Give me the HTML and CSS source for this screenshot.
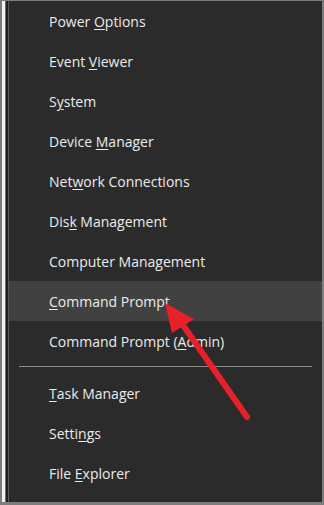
FILE: index.html
```html
<!DOCTYPE html>
<html lang="en">
<head>
    <meta charset="UTF-8">
    <meta name="viewport" content="width=device-width, initial-scale=1.0">
    <title>Quick Link Menu</title>
    <link rel="stylesheet" href="styles.css">
</head>
<body>
    <div class="frame">
        <div class="menu">
            <ul class="menu-list">
                <li class="menu-item">Power <u>O</u>ptions</li>
                <li class="menu-item">Event <u>V</u>iewer</li>
                <li class="menu-item">S<u>y</u>stem</li>
                <li class="menu-item">Device <u>M</u>anager</li>
                <li class="menu-item">Net<u>w</u>ork Connections</li>
                <li class="menu-item">Dis<u>k</u> Management</li>
                <li class="menu-item">Computer Mana<u>g</u>ement</li>
                <li class="menu-item active"><u>C</u>ommand Prompt</li>
                <li class="menu-item">Command Prompt (<u>A</u>dmin)</li>
            </ul>
            <div class="separator"></div>
            <ul class="menu-list">
                <li class="menu-item"><u>T</u>ask Manager</li>
                <li class="menu-item">Setti<u>n</u>gs</li>
                <li class="menu-item">File <u>E</u>xplorer</li>
            </ul>
        </div>
    </div>

    <!-- annotation arrow drawn over the menu -->
    <svg class="arrow" width="324" height="505" viewBox="0 0 324 505">
        <line x1="247" y1="417" x2="178" y2="318" stroke="#e8202a" stroke-width="6" stroke-linecap="round"/>
        <polygon points="165,303 194,319 172,333" fill="#e8202a"/>
    </svg>
</body>
</html>
```

FILE: styles.css
```css
/* Win+X menu */
body {
    margin: 0;
    background-color: #7c7c7c;
    font-family: "Open Sans", "Noto Sans", sans-serif;
    position: relative;
    width: 324px;
    height: 505px;
    overflow: hidden;
}

.frame {
    margin: 2px 2px 2px 2px;
    height: 501px;
    border-left: 3px solid #f2f2f2;
    box-sizing: border-box;
}

.menu {
    height: 100%;
    background-color: #2b2b2b;
    border-left: 1px solid #6e6e6e;
    box-shadow: inset 2px 0 0 #1f1f1f, inset 3px 0 0 #5a5a5a;
    padding-left: 3px;
    box-sizing: border-box;
}

.menu-list {
    list-style: none;
    margin: 0;
    padding: 0;
}

.menu-list:first-child {
    margin-top: -1px;
}

.menu-item {
    height: 40px;
    line-height: 42px;
    padding-left: 40px;
    color: #ebebeb;
    font-size: 14px;
    white-space: nowrap;
    box-sizing: border-box;
}

.menu-item u {
    text-underline-offset: 2px;
    text-decoration-thickness: 1px;
}

.menu-item.active {
    background-color: #414141;
    box-shadow: inset -1px 0 0 #4c4c4c;
}

.separator {
    height: 1px;
    background-color: #8a8a8a;
    margin: 5px 10px 6px 10px;
}

.arrow {
    position: absolute;
    left: 0;
    top: 0;
}
```
